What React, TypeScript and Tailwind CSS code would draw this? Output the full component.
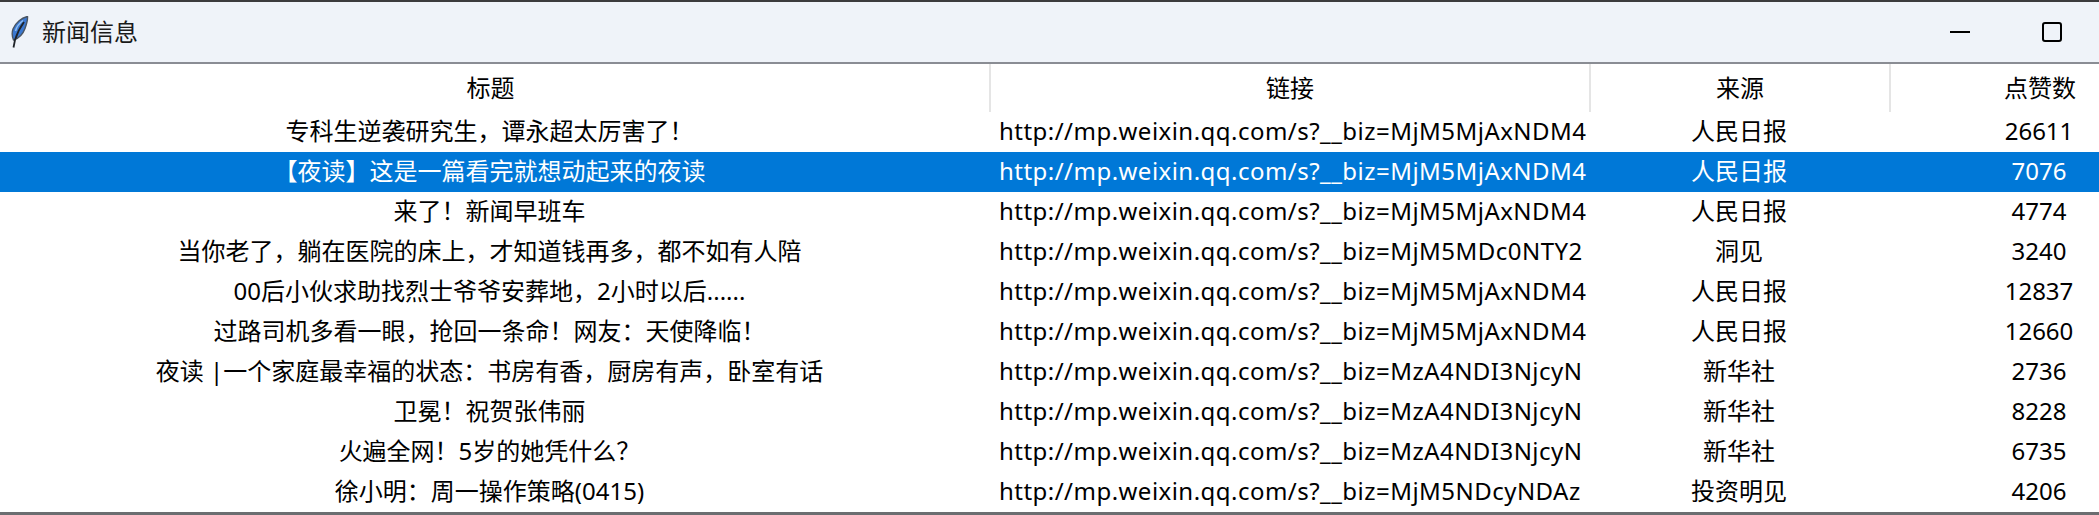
const rows = [
  { title: "专科生逆袭研究生\uFF0C谭永超太厉害了\uFF01", url: "http://mp.weixin.qq.com/s?__biz=MjM5MjAxNDM4", source: "人民日报", likes: "26611" },
  { title: "【夜读】这是一篇看完就想动起来的夜读", url: "http://mp.weixin.qq.com/s?__biz=MjM5MjAxNDM4", source: "人民日报", likes: "7076", selected: true },
  { title: "来了\uFF01新闻早班车", url: "http://mp.weixin.qq.com/s?__biz=MjM5MjAxNDM4", source: "人民日报", likes: "4774" },
  { title: "当你老了\uFF0C躺在医院的床上\uFF0C才知道钱再多\uFF0C都不如有人陪", url: "http://mp.weixin.qq.com/s?__biz=MjM5MDc0NTY2", source: "洞见", likes: "3240" },
  { title: "00后小伙求助找烈士爷爷安葬地\uFF0C2小时以后......", url: "http://mp.weixin.qq.com/s?__biz=MjM5MjAxNDM4", source: "人民日报", likes: "12837" },
  { title: "过路司机多看一眼\uFF0C抢回一条命\uFF01网友\uFF1A天使降临\uFF01", url: "http://mp.weixin.qq.com/s?__biz=MjM5MjAxNDM4", source: "人民日报", likes: "12660" },
  { title: "夜读 |一个家庭最幸福的状态\uFF1A书房有香\uFF0C厨房有声\uFF0C卧室有话", url: "http://mp.weixin.qq.com/s?__biz=MzA4NDI3NjcyN", source: "新华社", likes: "2736" },
  { title: "卫冕\uFF01祝贺张伟丽", url: "http://mp.weixin.qq.com/s?__biz=MzA4NDI3NjcyN", source: "新华社", likes: "8228" },
  { title: "火遍全网\uFF015岁的她凭什么\uFF1F", url: "http://mp.weixin.qq.com/s?__biz=MzA4NDI3NjcyN", source: "新华社", likes: "6735" },
  { title: "徐小明\uFF1A周一操作策略(0415)", url: "http://mp.weixin.qq.com/s?__biz=MjM5NDcyNDAz", source: "投资明见", likes: "4206" },
];

function FeatherIcon() {
  return (
    <svg width="18" height="32" viewBox="0 0 18 32" className="shrink-0">
      <path d="M16.5 .5C11 1.5 4.5 6.5 2 13c-1.2 3.5-1 7.5.5 11 5-1.5 9.5-6 11.5-11.5C15.5 8.5 16.8 4 16.5 .5z" fill="#3b78d0" stroke="#4a5563" strokeWidth="1.4" />
      <path d="M12 4.5C8 7.5 5.5 11 4.5 15" fill="none" stroke="#8fbdf0" strokeWidth="1.5" />
      <path d="M13 6C9 11.5 6 17.5 4 24L2.5 31.5" fill="none" stroke="#1f2329" strokeWidth="1.8" />
    </svg>
  );
}

export default function App() {
  return (
    <div className="flex h-[515px] w-[2099px] flex-col overflow-hidden bg-white font-['Noto_Sans','Noto_Sans_CJK_SC',sans-serif] text-[24px] leading-none text-black">
      <div className="h-[2px] shrink-0 bg-[#3b3b3d]" />

      {/* title bar */}
      <div className="flex h-[60px] shrink-0 items-center bg-[#eff3f9] pl-[11px]">
        <FeatherIcon />
        <span className="ml-[13px] text-[#1a1a1a]">新闻信息</span>
        <div className="ml-auto flex items-center gap-[72px] pr-[37px]">
          <div className="h-[2px] w-[20px] bg-black" />
          <div className="h-[20px] w-[20px] rounded-[3px] border-2 border-black" />
        </div>
      </div>
      <div className="h-[2px] shrink-0 bg-[#8a8d94]" />

      {/* header */}
      <div className="flex h-[48px] shrink-0">
        <div className="flex w-[989px] shrink-0 items-center justify-center pr-[8px] pb-[1px]">标题</div>
        <div className="flex w-[600px] shrink-0 items-center justify-center border-l-2 border-[#e5e5e5] pb-[1px]">链接</div>
        <div className="flex w-[300px] shrink-0 items-center justify-center border-l-2 border-[#e5e5e5] pb-[1px]">来源</div>
        <div className="flex w-[300px] shrink-0 items-center justify-center border-l-2 border-[#e5e5e5] pb-[1px]">点赞数</div>
      </div>

      {/* rows */}
      <div className="flex flex-col">
        {rows.map((row, i) => (
          <div key={i} className={row.selected ? "flex h-[40px] shrink-0 items-center bg-[#0078d7] pb-[3px] text-white" : "flex h-[40px] shrink-0 items-center pb-[3px]"}>
            <div className="w-[989px] shrink-0 pr-[10px] text-center whitespace-nowrap">{row.title}</div>
            <div className="w-[600px] shrink-0 pl-[10px] tracking-[0.47px] whitespace-nowrap">{row.url}</div>
            <div className="w-[300px] shrink-0 text-center">{row.source}</div>
            <div className="w-[300px] shrink-0 text-center">{row.likes}</div>
          </div>
        ))}
      </div>

      <div className="mt-auto h-[3px] shrink-0 bg-[#6b6d70]" />
    </div>
  );
}
